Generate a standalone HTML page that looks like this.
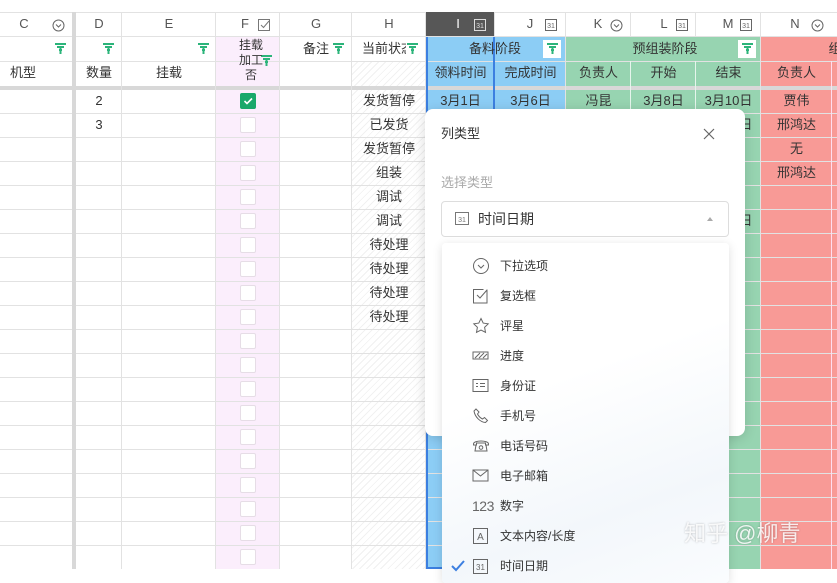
<!DOCTYPE html>
<html><head><meta charset="utf-8">
<style>
*{box-sizing:border-box;margin:0;padding:0}
body{width:837px;height:569px;overflow:hidden;position:relative;background:#fff;font-family:"Liberation Sans","Noto Sans CJK SC",sans-serif;font-size:13px;color:#333}
.a{position:absolute}
.col{position:absolute;top:12px;bottom:0;border-right:1px solid #e2e2e2}
.t{position:absolute;text-align:center;white-space:nowrap;line-height:24px}
.hl{position:absolute;left:0;right:0;height:1px;background:#e2e2e2}
.rows{position:absolute;left:0;top:90px;width:837px;height:479px;background:repeating-linear-gradient(to bottom,transparent 0,transparent 23px,#e2e2e2 23px,#e2e2e2 24px)}
.filt{position:absolute;width:10px;height:10px}
.cb{position:absolute;left:240px;width:16px;height:16px;border:1px solid #e6dde6;border-radius:2px;background:#fff}
.item{position:absolute;left:472px;height:20px;line-height:20px;font-size:12px;color:#333}
.item span{position:absolute;left:28px;top:0;white-space:nowrap}
.item svg{position:absolute;left:0;top:1px}
</style></head><body>
<!-- column backgrounds -->
<div class="a" style="left:216px;top:37px;width:64px;height:532px;background:#fbeefc"></div>
<div class="a" style="left:352px;top:61px;width:74px;height:508px;background:repeating-linear-gradient(135deg,#fff 0,#fff 4px,#f1f1f1 4px,#f1f1f1 5px)"></div>
<div class="a" style="left:426px;top:37px;width:140px;height:532px;background:#8ccdf5"></div>
<div class="a" style="left:566px;top:37px;width:195px;height:532px;background:#97d4b1"></div>
<div class="a" style="left:761px;top:37px;width:76px;height:532px;background:#f89a96"></div>
<div class="rows"></div>
<!-- header backgrounds -->
<div class="a" style="left:0;top:12px;width:837px;height:25px;background:#fff;border-top:1px solid #e2e2e2"></div>
<div class="a" style="left:426px;top:12px;width:69px;height:25px;background:#575757"></div>
<div class="hl" style="top:36px"></div>
<div class="hl" style="top:61px"></div>
<div class="a" style="left:0;top:86px;width:837px;height:4px;background:#d8d8d8"></div>
<div class="a" style="left:72px;top:12px;width:4px;height:557px;background:#d8d8d8"></div>
<!-- vertical lines -->
<div class="a" style="left:121px;top:12px;width:1px;height:557px;background:#e2e2e2"></div>
<div class="a" style="left:215px;top:12px;width:1px;height:557px;background:#e2e2e2"></div>
<div class="a" style="left:279px;top:12px;width:1px;height:557px;background:#e2e2e2"></div>
<div class="a" style="left:351px;top:12px;width:1px;height:557px;background:#e2e2e2"></div>
<div class="a" style="left:425px;top:12px;width:1px;height:557px;background:#e2e2e2"></div>
<div class="a" style="left:494px;top:61px;width:1px;height:508px;background:#e4f3fc"></div>
<div class="a" style="left:565px;top:12px;width:1px;height:557px;background:#e2e2e2"></div>
<div class="a" style="left:630px;top:61px;width:1px;height:508px;background:#e6f5ec"></div>
<div class="a" style="left:695px;top:61px;width:1px;height:508px;background:#e6f5ec"></div>
<div class="a" style="left:760px;top:12px;width:1px;height:557px;background:#e2e2e2"></div>
<div class="a" style="left:831px;top:61px;width:1px;height:508px;background:#fde"></div>
<div class="a" style="left:494px;top:12px;width:1px;height:25px;background:#e2e2e2"></div>
<div class="a" style="left:630px;top:12px;width:1px;height:25px;background:#e2e2e2"></div>
<div class="a" style="left:695px;top:12px;width:1px;height:25px;background:#e2e2e2"></div>
<!-- I selection border -->
<div class="a" style="left:426px;top:37px;width:69px;height:532px;border:2px solid #3c7fe0;border-top:none"></div>
<!-- column letters -->
<div class="t" style="left:0;top:12px;width:48px;color:#555">C</div>
<svg class="a" style="left:52px;top:19px" width="13" height="13"><circle cx="6.5" cy="6.5" r="5.5" fill="none" stroke="#666"/><path d="M4 5.5l2.5 2.5 2.5-2.5" fill="none" stroke="#666"/></svg>
<div class="t" style="left:76px;top:12px;width:46px;color:#555">D</div>
<div class="t" style="left:122px;top:12px;width:94px;color:#555">E</div>
<div class="t" style="left:238px;top:12px;width:14px;color:#555">F</div>
<svg class="a" style="left:258px;top:19px" width="13" height="13"><rect x=".5" y=".5" width="11" height="11" fill="none" stroke="#777"/><path d="M3 6l2.5 2.5L11 2" fill="none" stroke="#777"/></svg>
<div class="t" style="left:280px;top:12px;width:72px;color:#555">G</div>
<div class="t" style="left:352px;top:12px;width:74px;color:#555">H</div>
<div class="t" style="left:452px;top:12px;width:12px;color:#fff">I</div>
<div class="t" style="left:520px;top:12px;width:20px;color:#555">J</div>
<div class="t" style="left:588px;top:12px;width:20px;color:#555">K</div>
<div class="t" style="left:654px;top:12px;width:20px;color:#555">L</div>
<div class="t" style="left:718px;top:12px;width:20px;color:#555">M</div>
<div class="t" style="left:785px;top:12px;width:20px;color:#555">N</div>
<svg class="a" style="left:474px;top:19px" width="12" height="12"><rect x=".5" y=".5" width="11" height="11" fill="none" stroke="#ddd"/><text x="6" y="9" font-size="7" fill="#ddd" text-anchor="middle" font-family="Liberation Sans">31</text></svg>
<svg class="a" style="left:545px;top:19px" width="12" height="12"><rect x=".5" y=".5" width="11" height="11" fill="none" stroke="#666"/><text x="6" y="9" font-size="7" fill="#666" text-anchor="middle" font-family="Liberation Sans">31</text></svg>
<svg class="a" style="left:610px;top:19px" width="13" height="13"><circle cx="6.5" cy="6.5" r="5.5" fill="none" stroke="#666"/><path d="M4 5.5l2.5 2.5 2.5-2.5" fill="none" stroke="#666"/></svg>
<svg class="a" style="left:676px;top:19px" width="12" height="12"><rect x=".5" y=".5" width="11" height="11" fill="none" stroke="#666"/><text x="6" y="9" font-size="7" fill="#666" text-anchor="middle" font-family="Liberation Sans">31</text></svg>
<svg class="a" style="left:740px;top:19px" width="12" height="12"><rect x=".5" y=".5" width="11" height="11" fill="none" stroke="#666"/><text x="6" y="9" font-size="7" fill="#666" text-anchor="middle" font-family="Liberation Sans">31</text></svg>
<svg class="a" style="left:811px;top:19px" width="13" height="13"><circle cx="6.5" cy="6.5" r="5.5" fill="none" stroke="#666"/><path d="M4 5.5l2.5 2.5 2.5-2.5" fill="none" stroke="#666"/></svg>
<!-- filters -->
<svg class="a" style="left:55px;top:43px" width="11" height="11"><path d="M0 1h11M2 4h7M4 7h3M5.5 4v7" stroke="#2bb47a" stroke-width="2"/></svg>
<svg class="a" style="left:103px;top:43px" width="11" height="11"><path d="M0 1h11M2 4h7M4 7h3M5.5 4v7" stroke="#2bb47a" stroke-width="2"/></svg>
<svg class="a" style="left:198px;top:43px" width="11" height="11"><path d="M0 1h11M2 4h7M4 7h3M5.5 4v7" stroke="#2bb47a" stroke-width="2"/></svg>
<svg class="a" style="left:261px;top:55px" width="11" height="11"><path d="M0 1h11M2 4h7M4 7h3M5.5 4v7" stroke="#2bb47a" stroke-width="2"/></svg>
<svg class="a" style="left:333px;top:43px" width="11" height="11"><path d="M0 1h11M2 4h7M4 7h3M5.5 4v7" stroke="#2bb47a" stroke-width="2"/></svg>
<svg class="a" style="left:407px;top:43px" width="11" height="11"><path d="M0 1h11M2 4h7M4 7h3M5.5 4v7" stroke="#2bb47a" stroke-width="2"/></svg>
<div class="a" style="left:543px;top:40px;width:18px;height:18px;background:#fff"></div>
<svg class="a" style="left:547px;top:43px" width="11" height="11"><path d="M0 1h11M2 4h7M4 7h3M5.5 4v7" stroke="#2bb47a" stroke-width="2"/></svg>
<div class="a" style="left:738px;top:40px;width:18px;height:18px;background:#fff"></div>
<svg class="a" style="left:742px;top:43px" width="11" height="11"><path d="M0 1h11M2 4h7M4 7h3M5.5 4v7" stroke="#2bb47a" stroke-width="2"/></svg>
<!-- header texts -->
<div class="a" style="left:236px;top:38px;font-size:12px;line-height:15px;width:30px;text-align:center">挂载<br>加工<br>否</div>
<div class="t" style="left:300px;top:37px;width:32px">备注</div>
<div class="t" style="left:362px;top:37px;width:44px;overflow:hidden">当前状态</div>
<div class="t" style="left:460px;top:37px;width:70px">备料阶段</div>
<div class="t" style="left:600px;top:37px;width:130px">预组装阶段</div>
<div class="t" style="left:825px;top:37px;width:20px">组</div>
<div class="t" style="left:10px;top:61px">机型</div>
<div class="t" style="left:76px;top:61px;width:46px">数量</div>
<div class="t" style="left:122px;top:61px;width:94px">挂载</div>
<div class="t" style="left:426px;top:61px;width:69px">领料时间</div>
<div class="t" style="left:495px;top:61px;width:71px">完成时间</div>
<div class="t" style="left:566px;top:61px;width:65px">负责人</div>
<div class="t" style="left:631px;top:61px;width:65px">开始</div>
<div class="t" style="left:696px;top:61px;width:65px">结束</div>
<div class="t" style="left:761px;top:61px;width:71px">负责人</div>
<!-- data -->
<div class="t" style="left:76px;top:89px;width:46px">2</div>
<div class="t" style="left:76px;top:113px;width:46px">3</div>
<div class="t" style="left:352px;top:89px;width:74px">发货暂停</div>
<div class="t" style="left:352px;top:113px;width:74px">已发货</div>
<div class="t" style="left:352px;top:137px;width:74px">发货暂停</div>
<div class="t" style="left:352px;top:161px;width:74px">组装</div>
<div class="t" style="left:352px;top:185px;width:74px">调试</div>
<div class="t" style="left:352px;top:209px;width:74px">调试</div>
<div class="t" style="left:352px;top:233px;width:74px">待处理</div>
<div class="t" style="left:352px;top:257px;width:74px">待处理</div>
<div class="t" style="left:352px;top:281px;width:74px">待处理</div>
<div class="t" style="left:352px;top:305px;width:74px">待处理</div>
<div class="t" style="left:426px;top:89px;width:69px">3月1日</div>
<div class="t" style="left:495px;top:89px;width:71px">3月6日</div>
<div class="t" style="left:566px;top:89px;width:65px">冯昆</div>
<div class="t" style="left:631px;top:89px;width:65px">3月8日</div>
<div class="t" style="left:696px;top:89px;width:65px">3月10日</div>
<div class="t" style="left:696px;top:113px;width:65px">3月10日</div>
<div class="t" style="left:696px;top:209px;width:65px">3月10日</div>
<div class="t" style="left:761px;top:89px;width:71px">贾伟</div>
<div class="t" style="left:761px;top:113px;width:71px">邢鸿达</div>
<div class="t" style="left:761px;top:137px;width:71px">无</div>
<div class="t" style="left:761px;top:161px;width:71px">邢鸿达</div>
<!-- checkboxes -->
<div class="cb" style="top:93px;background:#1aa86b;border-color:#1aa86b"><svg width="14" height="14" style="position:absolute;left:0;top:0"><path d="M3.5 7l2.5 2.5 5-5" fill="none" stroke="#fff" stroke-width="1.6"/></svg></div>
<div class="cb" style="top:117px"></div><div class="cb" style="top:141px"></div><div class="cb" style="top:165px"></div><div class="cb" style="top:189px"></div><div class="cb" style="top:213px"></div><div class="cb" style="top:237px"></div><div class="cb" style="top:261px"></div><div class="cb" style="top:285px"></div><div class="cb" style="top:309px"></div><div class="cb" style="top:333px"></div><div class="cb" style="top:357px"></div><div class="cb" style="top:381px"></div><div class="cb" style="top:405px"></div><div class="cb" style="top:429px"></div><div class="cb" style="top:453px"></div><div class="cb" style="top:477px"></div><div class="cb" style="top:501px"></div><div class="cb" style="top:525px"></div><div class="cb" style="top:549px"></div>
<!-- modal -->
<div class="a" style="left:425px;top:109px;width:320px;height:327px;background:#fff;border-radius:8px;box-shadow:0 2px 12px rgba(0,0,0,.15)"></div>
<div class="a" style="left:441px;top:125px;font-size:13px;line-height:18px">列类型</div>
<svg class="a" style="left:703px;top:128px" width="12" height="12"><path d="M1 1l10 10M11 1L1 11" stroke="#666" stroke-width="1.2"/></svg>
<div class="a" style="left:441px;top:174px;font-size:13px;color:#aaa;line-height:18px">选择类型</div>
<div class="a" style="left:441px;top:201px;width:288px;height:36px;border:1px solid #ddd;border-radius:4px"></div>
<svg class="a" style="left:455px;top:211px" width="14" height="14"><rect x=".5" y="1.5" width="13" height="12" fill="none" stroke="#777"/><text x="7" y="11" font-size="7" fill="#777" text-anchor="middle" font-family="Liberation Sans">31</text></svg>
<div class="a" style="left:478px;top:209px;font-size:14px;line-height:20px">时间日期</div>
<div class="a" style="left:707px;top:217px;width:0;height:0;border-left:3px solid transparent;border-right:3px solid transparent;border-bottom:4px solid #aaa"></div>
<!-- dropdown list -->
<div class="a" style="left:442px;top:243px;width:287px;height:340px;background:linear-gradient(160deg,#fff 40%,#f3f7fb 75%,#fafcfe);border-radius:4px;box-shadow:0 2px 10px rgba(0,0,0,.13)"></div>
<div class="item" style="top:256px"><svg width="18" height="18"><circle cx="9" cy="9" r="7.5" fill="none" stroke="#666"/><path d="M6 8l3 3 3-3" fill="none" stroke="#666"/></svg><span>下拉选项</span></div>
<div class="item" style="top:286px"><svg width="18" height="18"><path d="M15 2.5V16H1.5V2.5h10" fill="none" stroke="#666"/><path d="M5 8l3 3 7-8" fill="none" stroke="#666"/></svg><span>复选框</span></div>
<div class="item" style="top:316px"><svg width="18" height="18"><path d="M9 1.5l2.2 4.6 5 .7-3.6 3.5.9 5L9 13l-4.5 2.3.9-5L1.8 6.8l5-.7z" fill="none" stroke="#666"/></svg><span>评星</span></div>
<div class="item" style="top:346px"><svg width="18" height="18"><rect x="1" y="5" width="15" height="7" fill="none" stroke="#666"/><path d="M3 11l5-5M7 11l5-5M11 11l4-4" stroke="#666"/></svg><span>进度</span></div>
<div class="item" style="top:376px"><svg width="18" height="18"><rect x="1" y="2.5" width="15" height="12" fill="none" stroke="#666"/><path d="M4 6.5h2M4 9.5h2M8 6.5h5M8 9.5h5" stroke="#666"/></svg><span>身份证</span></div>
<div class="item" style="top:406px"><svg width="18" height="18"><path d="M4 2l3 3-1.5 2c1 2 3 4 5 5l2-1.5 3 3-2 2C8 15 3 10 2 4z" fill="none" stroke="#666"/></svg><span>手机号</span></div>
<div class="item" style="top:436px"><svg width="18" height="18"><path d="M1.5 7c0-4 15-4 15 0v1h-3V6h-9v2h-3zM4 8l-1 6h12l-1-6" fill="none" stroke="#666"/><circle cx="9" cy="10.5" r="1.8" fill="none" stroke="#666"/></svg><span>电话号码</span></div>
<div class="item" style="top:466px"><svg width="18" height="18"><rect x="1" y="3" width="15" height="11" fill="none" stroke="#666"/><path d="M1 3l7.5 6L16 3" fill="none" stroke="#666"/></svg><span>电子邮箱</span></div>
<div class="item" style="top:496px"><span style="left:0;color:#666;font-size:14px;letter-spacing:-.5px">123</span><span>数字</span></div>
<div class="item" style="top:526px"><svg width="18" height="18"><rect x="1.5" y="1.5" width="14" height="15" fill="none" stroke="#666"/><text x="8.5" y="13" font-size="10" fill="#666" text-anchor="middle" font-family="Liberation Sans">A</text></svg><span>文本内容/长度</span></div>
<div class="item" style="top:556px"><svg width="18" height="18"><rect x="1.5" y="2.5" width="14" height="14" fill="none" stroke="#666"/><text x="8.5" y="13" font-size="8" fill="#666" text-anchor="middle" font-family="Liberation Sans">31</text></svg><span>时间日期</span></div>
<svg class="a" style="left:451px;top:560px" width="14" height="12"><path d="M1 6l4 4 8-9" fill="none" stroke="#3c7fe0" stroke-width="2"/></svg>
<!-- watermark -->
<div class="a" style="left:684px;top:519px;font-size:22px;color:rgba(255,255,255,.85);line-height:30px;text-shadow:0 0 2px rgba(0,0,0,.25);white-space:nowrap">知乎 @柳青</div>
</body></html>
